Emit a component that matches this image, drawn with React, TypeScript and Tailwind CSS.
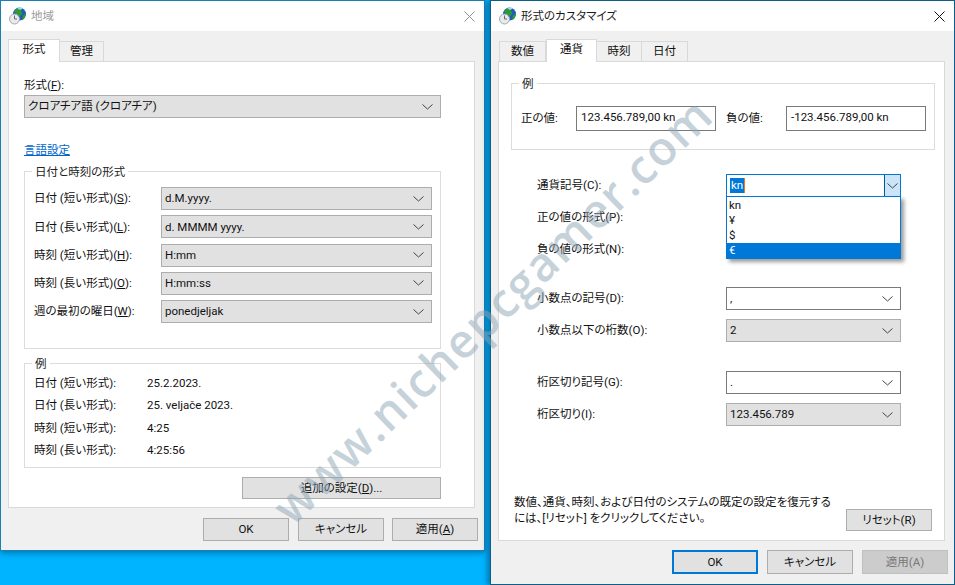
import type { ReactNode } from 'react';

const FONT = 'Roboto, "Noto Sans CJK JP", sans-serif';

function GlobeIcon() {
  return (
    <svg width="17" height="18" viewBox="0 0 17 18" className="shrink-0">
      <circle cx="10.5" cy="7" r="6.5" fill="#1d5fb8" />
      <path d="M5 4 C6 2 9 0.5 12 1 L12 4 L13.5 6 L11 9.5 L9 8 L7 7 Z" fill="#2f9a34" />
      <path d="M13.5 9 L16.5 6.5 C17 9 15.5 12 13.5 13 Z" fill="#2f9a34" />
      <path d="M8 1 C10 0 12.5 0.3 14 1.5 L11 3 Z" fill="#9fd6f2" />
      <circle cx="5.5" cy="12" r="5" fill="#e8eaec" stroke="#a3a8ad" />
      <path d="M5.5 8.5 V12 H8" stroke="#6b6b6b" fill="none" />
    </svg>
  );
}

function Chevron({ color = '#444' }: { color?: string }) {
  return (
    <svg width="11" height="6" viewBox="0 0 11 6">
      <path d="M0.5 0.5 L5.5 5 L10.5 0.5" stroke={color} fill="none" />
    </svg>
  );
}

function CloseIcon({ color }: { color: string }) {
  return (
    <svg width="11" height="11" viewBox="0 0 11 11">
      <path d="M0.5 0.5 L10.5 10.5 M10.5 0.5 L0.5 10.5" stroke={color} />
    </svg>
  );
}

function TitleBar({ title, inactive }: { title: string; inactive?: boolean }) {
  return (
    <div className="h-[30px] bg-white flex items-center pl-[8px] pr-[9px] shrink-0">
      <GlobeIcon />
      <span className={`ml-[5px] pt-[1px] ${inactive ? 'text-[#9a9a9a]' : 'text-[#1a1a1a]'}`}>{title}</span>
      <span className="ml-auto flex">
        <CloseIcon color={inactive ? '#8f8f8f' : '#111111'} />
      </span>
    </div>
  );
}

function Tabs({ items, active, widths }: { items: string[]; active: number; widths: string[] }) {
  return (
    <div className="flex items-end h-[23px] relative z-10 -mb-px">
      {items.map((item, i) =>
        i === active ? (
          <div key={item} className={`${widths[i]} h-[23px] bg-white border border-b-0 border-[#d9d9d9] flex justify-center pt-[1px] text-[#111]`}>
            {item}
          </div>
        ) : (
          <div key={item} className={`${widths[i]} h-[21px] bg-[#f0f0f0] border border-[#d9d9d9] -ml-px flex justify-center items-center pt-[1px] text-[#111]`}>
            {item}
          </div>
        )
      )}
    </div>
  );
}

function Combo({ value, className, white }: { value: string; className: string; white?: boolean }) {
  return (
    <div className={`${className} flex items-center pl-[3px] pr-[7px] border text-[#111] ${white ? 'bg-white border-[#7a7a7a]' : 'bg-[#e1e1e1] border-[#adadad]'}`}>
      <span className="pt-[1px]">{value}</span>
      <span className="ml-auto flex"><Chevron /></span>
    </div>
  );
}

function Btn({ children, className, primary, disabled }: { children: ReactNode; className: string; primary?: boolean; disabled?: boolean }) {
  return (
    <div
      className={`${className} flex items-center justify-center pt-[1px] ${
        primary
          ? 'border-2 border-[#0078d7] bg-[#e1e1e1] text-[#111]'
          : disabled
            ? 'border border-[#bfbfbf] bg-[#cccccc] text-[#787878]'
            : 'border border-[#adadad] bg-[#e1e1e1] text-[#111]'
      }`}
    >
      <span>{children}</span>
    </div>
  );
}

function Group({ title, className, children }: { title: string; className: string; children: ReactNode }) {
  return (
    <div className={`${className} relative border border-[#dcdcdc]`}>
      <span className="absolute -top-[8px] left-[7px] bg-white px-[3px] leading-[16px] text-[#222]">{title}</span>
      {children}
    </div>
  );
}

function FormatRow({ label, value }: { label: ReactNode; value: string }) {
  return (
    <div className="flex items-center h-[23px] mb-[5.25px]">
      <span className="w-[127px] pt-[1px] text-[#111]">{label}</span>
      <Combo value={value} className="w-[271px] h-[23px]" />
    </div>
  );
}

function SampleRow({ label, value }: { label: string; value: string }) {
  return (
    <div className="flex items-center h-[22.6px] text-[#111]">
      <span className="w-[113px]">{label}</span>
      <span>{value}</span>
    </div>
  );
}

function RegionWindow() {
  return (
    <div className="w-[485px] h-[551px] shrink-0 flex flex-col border border-[#1a7fb2] bg-[#f0f0f0] shadow-[0_2px_6px_rgba(0,40,80,0.45)]">
      <TitleBar title="地域" inactive />
      <div className="pl-[7px] pr-[9px] pt-[8px]">
        <Tabs items={['形式', '管理']} active={0} widths={['w-[52px]', 'w-[45px]']} />
        <div className="h-[447px] bg-white border border-[#d9d9d9] pl-[15px] pr-[34px] pt-[13px]">
          <div className="leading-[20px] h-[20px] text-[#111]">形式(<u>F</u>):</div>
          <Combo value="クロアチア語 (クロアチア)" className="w-[417px] h-[23px]" />
          <div className="mt-[21px] leading-[22px] text-[#0066cc] underline">言語設定</div>
          <Group title="日付と時刻の形式" className="w-[417px] h-[178px] mt-[10px] pl-[9px] pt-[15px]">
            <FormatRow label={<>日付 (短い形式)(<u>S</u>):</>} value="d.M.yyyy." />
            <FormatRow label={<>日付 (長い形式)(<u>L</u>):</>} value="d. MMMM yyyy." />
            <FormatRow label={<>時刻 (短い形式)(<u>H</u>):</>} value="H:mm" />
            <FormatRow label={<>時刻 (長い形式)(<u>O</u>):</>} value="H:mm:ss" />
            <FormatRow label={<>週の最初の曜日(<u>W</u>):</>} value="ponedjeljak" />
          </Group>
          <Group title="例" className="w-[417px] h-[105px] mt-[14px] pl-[9px] pt-[8px]">
            <SampleRow label="日付 (短い形式):" value="25.2.2023." />
            <SampleRow label="日付 (長い形式):" value="25. veljače 2023." />
            <SampleRow label="時刻 (短い形式):" value="4:25" />
            <SampleRow label="時刻 (長い形式):" value="4:25:56" />
          </Group>
          <div className="flex justify-end w-[417px] mt-[9px]">
            <Btn className="w-[199px] h-[22px]">追加の設定(<u>D</u>)...</Btn>
          </div>
        </div>
        <div className="flex justify-end gap-[9px] mt-[10px] -mr-[3px]">
          <Btn className="w-[86px] h-[23px] translate-x-px">OK</Btn>
          <Btn className="w-[86px] h-[23px] translate-x-px">キャンセル</Btn>
          <Btn className="w-[86px] h-[23px]">適用(<u>A</u>)</Btn>
        </div>
      </div>
    </div>
  );
}

function FieldRow({ label, className, children }: { label: string; className: string; children: ReactNode }) {
  return (
    <div className={`${className} flex items-center h-[23px] pl-[38px]`}>
      <span className="w-[189px] pt-[1px] text-[#111]">{label}</span>
      {children}
    </div>
  );
}

function CurrencyCombo() {
  return (
    <div className="relative w-[175px] h-[23px] border border-[#0078d7] bg-white flex items-stretch">
      <span className="ml-[3px] my-[3px] px-[1px] bg-[#0078d7] text-white leading-[15px] border-r border-[#e87a20]">kn</span>
      <span className="ml-auto w-[16px] bg-[#cce4f7] border-l border-[#005a9e] flex items-center justify-center">
        <Chevron />
      </span>
      <div className="absolute z-20 top-[21px] -left-px w-[175px] h-[63px] bg-white border border-[#0078d7] shadow-[3px_3px_4px_rgba(0,0,0,0.4)] text-[#111] leading-[15px] pt-[1px]">
        <div className="pl-[2px]">kn</div>
        <div className="pl-[2px]">¥</div>
        <div className="pl-[2px]">$</div>
        <div className="pl-[2px] bg-[#0078d7] text-white">€</div>
      </div>
    </div>
  );
}

function CustomizeWindow() {
  return (
    <div className="relative w-[465px] h-[585px] shrink-0 ml-[5px] flex flex-col border border-[#0c5f88] bg-[#f0f0f0] shadow-[-3px_0_5px_rgba(0,50,90,0.45)]">
      <TitleBar title="形式のカスタマイズ" />
      <div className="pl-[7px] pr-[9px] pt-[8px]">
        <div className="pl-[2px]">
          <Tabs items={['数値', '通貨', '時刻', '日付']} active={1} widths={['w-[47px]', 'w-[51px]', 'w-[46px]', 'w-[47px]']} />
        </div>
        <div className="h-[480px] bg-white border border-[#d9d9d9]">
          <Group title="例" className="w-[424px] h-[67px] ml-[12px] mt-[21px]">
            <div className="flex items-center h-[25px] mt-[22px] pl-[9px] text-[#111]">
              <span className="w-[55px] pt-[1px]">正の値:</span>
              <div className="w-[140px] h-[25px] border border-[#7a7a7a] pl-[4px] leading-[21px]">123.456.789,00 kn</div>
              <span className="w-[70px] pl-[10px] pt-[1px]">負の値:</span>
              <div className="w-[140px] h-[25px] border border-[#7a7a7a] pl-[4px] leading-[21px]">-123.456.789,00 kn</div>
            </div>
          </Group>
          <FieldRow label="通貨記号(C):" className="mt-[24px]"><CurrencyCombo /></FieldRow>
          <FieldRow label="正の値の形式(P):" className="mt-[9px]"><span /></FieldRow>
          <FieldRow label="負の値の形式(N):" className="mt-[9px]"><span /></FieldRow>
          <FieldRow label="小数点の記号(D):" className="mt-[26px]"><Combo white value="," className="w-[175px] h-[23px]" /></FieldRow>
          <FieldRow label="小数点以下の桁数(O):" className="mt-[9px]"><Combo value="2" className="w-[175px] h-[23px]" /></FieldRow>
          <FieldRow label="桁区切り記号(G):" className="mt-[29px]"><Combo white value="." className="w-[175px] h-[23px]" /></FieldRow>
          <FieldRow label="桁区切り(I):" className="mt-[9px]"><Combo value="123.456.789" className="w-[175px] h-[23px]" /></FieldRow>
          <div className="flex items-end mt-[68px] pl-[15px] pr-[12px]">
            <p className="w-[330px] mb-[5px] leading-[16px] text-[#111]">
              数値、通貨、時刻、および日付のシステムの既定の設定を復元する<br />には、[リセット] をクリックしてください。
            </p>
            <Btn className="ml-auto w-[86px] h-[22px]">リセット(R)</Btn>
          </div>
        </div>
        <div className="flex justify-end gap-[9px] mt-[9px] -mr-[3px]">
          <Btn primary className="w-[86px] h-[24px]">OK</Btn>
          <Btn className="w-[86px] h-[24px]">キャンセル</Btn>
          <Btn disabled className="w-[86px] h-[24px]">適用(A)</Btn>
        </div>
      </div>
    </div>
  );
}

export default function App() {
  return (
    <div className="relative w-[955px] h-[585px] overflow-hidden bg-[#00b4ff] flex items-start text-[11.5px] [font-feature-settings:'palt']" style={{ fontFamily: FONT }}>
      <RegionWindow />
      <CustomizeWindow />
      <div className="absolute z-30 left-[492px] top-[310px] -translate-x-1/2 -translate-y-1/2 -rotate-[44deg] whitespace-nowrap text-[47px] font-semibold tracking-[1.5px] text-[#8ea5b5]/50 pointer-events-none" style={{ fontFamily: '"Open Sans", sans-serif' }}>
        www.nichepcgamer.com
      </div>
    </div>
  );
}
